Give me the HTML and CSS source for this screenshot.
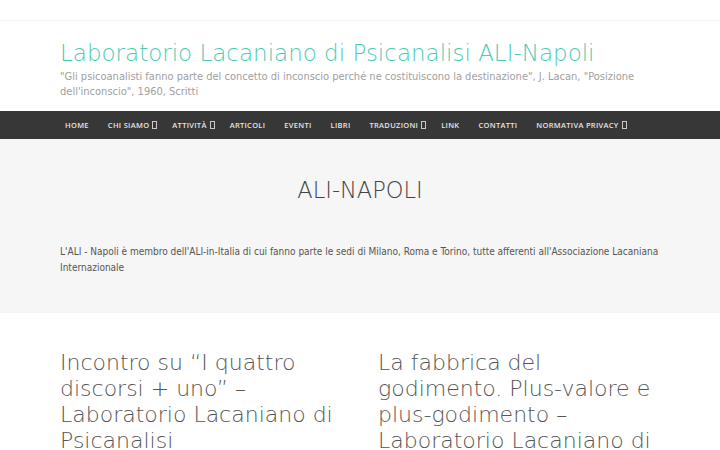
FILE: index.html
```html
<!DOCTYPE html>
<html lang="it">
<head>
<meta charset="utf-8">
<title>Laboratorio Lacaniano di Psicanalisi ALI-Napoli</title>
<link rel="stylesheet" href="styles.css">
</head>
<body>
<div class="topbar"></div>
<header class="site-header">
  <div class="container">
    <h1 class="site-title">Laboratorio Lacaniano di Psicanalisi ALI-Napoli</h1>
    <p class="site-desc">"Gli psicoanalisti fanno parte del concetto di inconscio perché ne costituiscono la destinazione", J. Lacan, "Posizione dell'inconscio", 1960, Scritti</p>
  </div>
</header>
<nav class="main-nav">
  <ul class="container menu">
    <li>HOME</li>
    <li class="has-sub">CHI SIAMO <span class="caret"></span></li>
    <li class="has-sub">ATTIVITÀ <span class="caret"></span></li>
    <li>ARTICOLI</li>
    <li>EVENTI</li>
    <li>LIBRI</li>
    <li class="has-sub">TRADUZIONI <span class="caret"></span></li>
    <li>LINK</li>
    <li>CONTATTI</li>
    <li class="has-sub">NORMATIVA PRIVACY <span class="caret"></span></li>
  </ul>
</nav>
<section class="intro">
  <div class="container">
    <h2 class="intro-title">ALI-NAPOLI</h2>
    <p class="intro-text">L'ALI - Napoli è membro dell'ALI-in-Italia di cui fanno parte le sedi di Milano, Roma e Torino, tutte afferenti all'Associazione Lacaniana Internazionale</p>
  </div>
</section>
<main class="container posts">
  <article class="post"><h3 class="post-title">Incontro su “I quattro discorsi + uno” – Laboratorio Lacaniano di Psicanalisi</h3></article>
  <article class="post"><h3 class="post-title">La fabbrica del godimento. Plus-valore e plus-godimento – Laboratorio Lacaniano di Psicanalisi</h3></article>
</main>
</body>
</html>
```
FILE: styles.css
```css
html, body { margin: 0; padding: 0; background: #fff; }
body { font-family: "DejaVu Sans", sans-serif; }
.container { width: 600px; margin: 0 auto; padding: 0; box-sizing: border-box; }
.topbar { height: 20px; border-bottom: 1px solid #f3f3f3; }
.site-header { padding: 17px 0 12px; }
.site-title {
  margin: 0; font-weight: 200; font-size: 23px; line-height: 30px;
  color: #4fcab5; font-family: "DejaVu Sans", sans-serif;
}
.site-desc {
  margin: 1px 0 0; font-size: 11px; line-height: 15px; color: #a0a0a0;
  font-family: "DejaVu Sans", sans-serif; font-stretch: condensed;
}
.main-nav { background: #373737; height: 28px; }
.menu { list-style: none; display: flex; align-items: center; height: 28px; margin: 0 auto; padding-left: 5px; }
.menu li {
  font-family: "Open Sans", sans-serif; font-weight: 600; font-size: 7.5px;
  letter-spacing: 0.3px; color: #e6e6e6; margin-right: 19px; white-space: nowrap;
  display: flex; align-items: center;
}
.menu li.has-sub { margin-right: 15px; }
.caret {
  display: inline-block; width: 3px; height: 6px; border: 1px solid #c8c8c8;
  margin-left: 3px; box-sizing: content-box;
}
.intro { background: #f6f6f6; padding: 36px 0 37px; }
.intro-title {
  margin: 0; text-align: center; font-weight: 200; font-size: 22.5px; line-height: 30px;
  color: #444; font-family: "DejaVu Sans", sans-serif;
}
.intro-text {
  margin: 39px 0 0; font-size: 10px; line-height: 16px; color: #555;
  font-family: "DejaVu Sans", sans-serif; font-stretch: condensed;
}
.posts { display: grid; grid-template-columns: 1fr 1fr; column-gap: 36px; padding-top: 37px; }
.post-title {
  margin: 0; font-weight: 200; font-size: 22px; line-height: 26px; color: #555;
  font-family: "DejaVu Sans", sans-serif;
}
```
